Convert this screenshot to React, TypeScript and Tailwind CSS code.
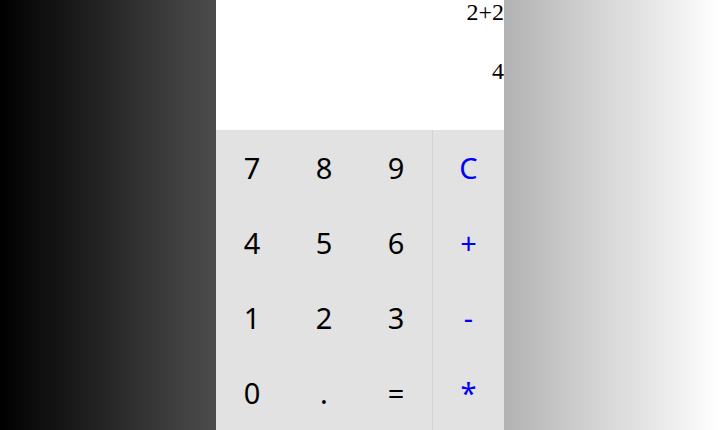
const KEYS: { label: string; op?: boolean }[][] = [
  [{ label: '7' }, { label: '8' }, { label: '9' }, { label: 'C', op: true }],
  [{ label: '4' }, { label: '5' }, { label: '6' }, { label: '+', op: true }],
  [{ label: '1' }, { label: '2' }, { label: '3' }, { label: '-', op: true }],
  [{ label: '0' }, { label: '.' }, { label: '=' }, { label: '*', op: true }],
];

export default function App() {
  return (
    <div className="w-[720px] h-[430px] overflow-hidden bg-[linear-gradient(to_right,#000,#fff)] flex justify-center">
      <div className="w-[288px] h-full flex flex-col">
        {/* display */}
        <div className="h-[130px] bg-white flex flex-col items-end text-[24px] leading-6 text-black">
          <span className="[font-family:'Liberation_Serif',serif]">2+2</span>
          <span className="mt-[35px] [font-family:'Liberation_Serif',serif]">4</span>
        </div>

        {/* keypad */}
        <div className="flex-1 bg-[#e2e2e2] grid grid-cols-4 grid-rows-4 font-['Noto_Sans',sans-serif] text-[29px]">
          {KEYS.flat().map((k) => (
            <button
              key={k.label}
              className={
                k.op
                  ? 'flex items-center justify-center text-[#0000ff] border-l border-[#d4d4d4]'
                  : 'flex items-center justify-center text-black'
              }
            >
              {k.label}
            </button>
          ))}
        </div>
      </div>
    </div>
  );
}
